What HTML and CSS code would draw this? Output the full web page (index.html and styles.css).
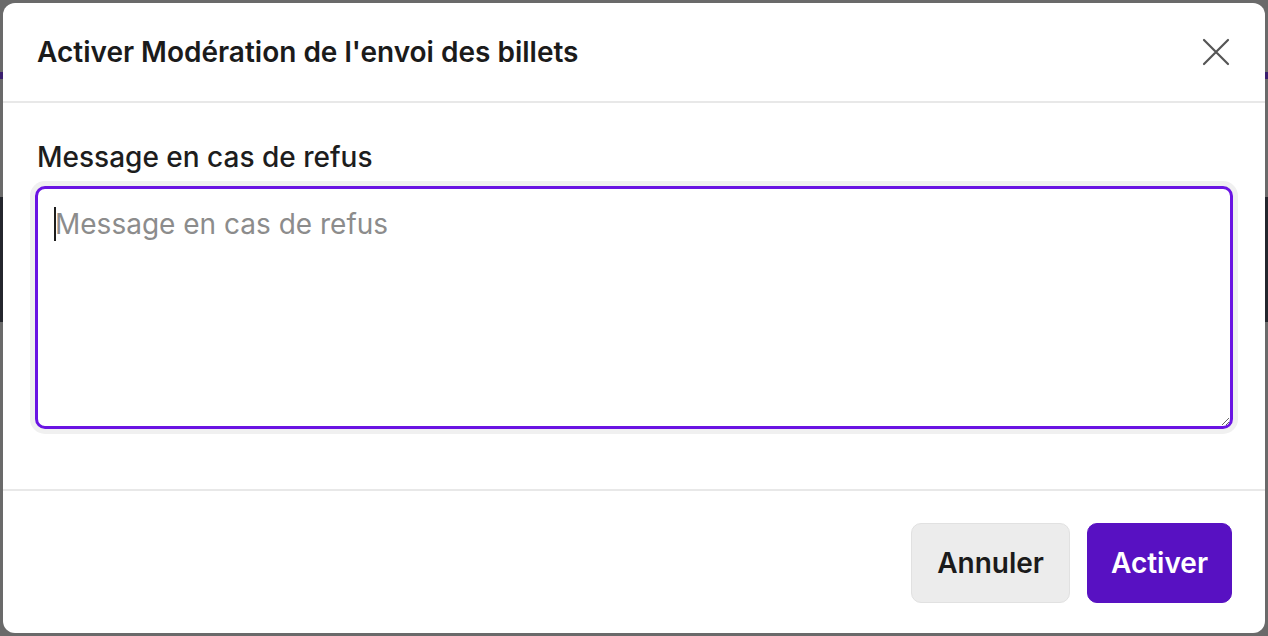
FILE: index.html
```html
<!DOCTYPE html>
<html lang="fr">
<head>
  <meta charset="UTF-8">
  <meta name="viewport" content="width=device-width, initial-scale=1.0">
  <title>Activer Modération de l'envoi des billets</title>
  <link rel="stylesheet" href="styles.css">
</head>
<body>
  <div class="backdrop">
    <div class="modal">
      <div class="modal-header">
        <h2 class="modal-title">Activer Modération de l'envoi des billets</h2>
        <button class="close-btn" aria-label="Fermer">
          <svg width="28" height="28" viewBox="0 0 28 28" fill="none" stroke="#555" stroke-width="2.2" stroke-linecap="round">
            <path d="M2 2 L26 26 M26 2 L2 26"/>
          </svg>
        </button>
      </div>

      <div class="modal-body">
        <label class="field-label" for="refus">Message en cas de refus</label>
        <div class="field-wrap">
          <textarea id="refus" class="field-input" placeholder="Message en cas de refus"></textarea>
          <span class="caret"></span>
        </div>
      </div>

      <div class="modal-footer">
        <button class="btn btn-secondary">Annuler</button>
        <button class="btn btn-primary">Activer</button>
      </div>
    </div>
  </div>
</body>
</html>
```

FILE: styles.css
```css
/* modal over a dimmed page */
body {
  margin: 0;
  font-family: Inter, "Noto Sans", sans-serif;
  background: linear-gradient(to bottom,
    #6a6a6a 0, #6a6a6a 72px,
    #3b1f6e 72px, #3b1f6e 79px,
    #6a6a6a 79px, #6a6a6a 197px,
    #24262d 197px, #24262d 322px,
    #6a6a6a 322px);
}

.backdrop {
  height: 636px;
  padding: 3px;
  box-sizing: border-box;
}

.modal {
  background-color: #fff;
  border-radius: 12px;
  height: 630px;
  display: flex;
  flex-direction: column;
}

.modal-header {
  height: 98px;
  display: flex;
  align-items: center;
  justify-content: space-between;
  padding: 0 34px 0 34px;
  border-bottom: 2px solid #e8e8e8;
}

.modal-title {
  margin: 0;
  font-size: 28px;
  font-weight: 600;
  color: #1b1b1b;
}

.close-btn {
  background: none;
  border: none;
  padding: 0;
  margin-right: 1px;
  display: flex;
  cursor: pointer;
}

.modal-body {
  padding: 37px 32px 0 32px;
  height: 388px;
  box-sizing: border-box;
  border-bottom: 2px solid #e8e8e8;
}

.field-label {
  display: block;
  font-size: 28px;
  font-weight: 500;
  color: #1d1d1d;
  line-height: 34px;
  margin: 0 0 12px 2px;
}

.field-wrap {
  position: relative;
}

.field-input {
  display: block;
  width: 100%;
  height: 243px;
  box-sizing: border-box;
  border: 3px solid #6a14e3;
  border-radius: 10px;
  box-shadow: 0 0 0 5px #f0f0f0;
  padding: 18px 17px 16px 17px;
  font-family: Inter, "Noto Sans", sans-serif;
  font-size: 28px;
  line-height: 34px;
  color: #1d1d1d;
  background: #fff;
  outline: none;
  resize: vertical;
}

.field-input::placeholder {
  color: #8c8c8c;
}

.caret {
  position: absolute;
  left: 19px;
  top: 21px;
  width: 2px;
  height: 34px;
  background-color: #1d1d1d;
}

.modal-footer {
  flex: 1;
  display: flex;
  justify-content: flex-end;
  align-items: flex-start;
  gap: 17px;
  padding: 32px 33px 0 0;
}

.btn {
  height: 80px;
  border-radius: 10px;
  font-family: Inter, "Noto Sans", sans-serif;
  font-size: 28px;
  font-weight: 600;
  padding: 0 25px;
  cursor: pointer;
}

.btn-secondary {
  background-color: #ececec;
  border: 1px solid #e1e1e1;
  color: #1b1b1b;
}

.btn-primary {
  background-color: #5811c2;
  border: 1px solid #5811c2;
  color: #fff;
  padding: 0 23px;
}
```
